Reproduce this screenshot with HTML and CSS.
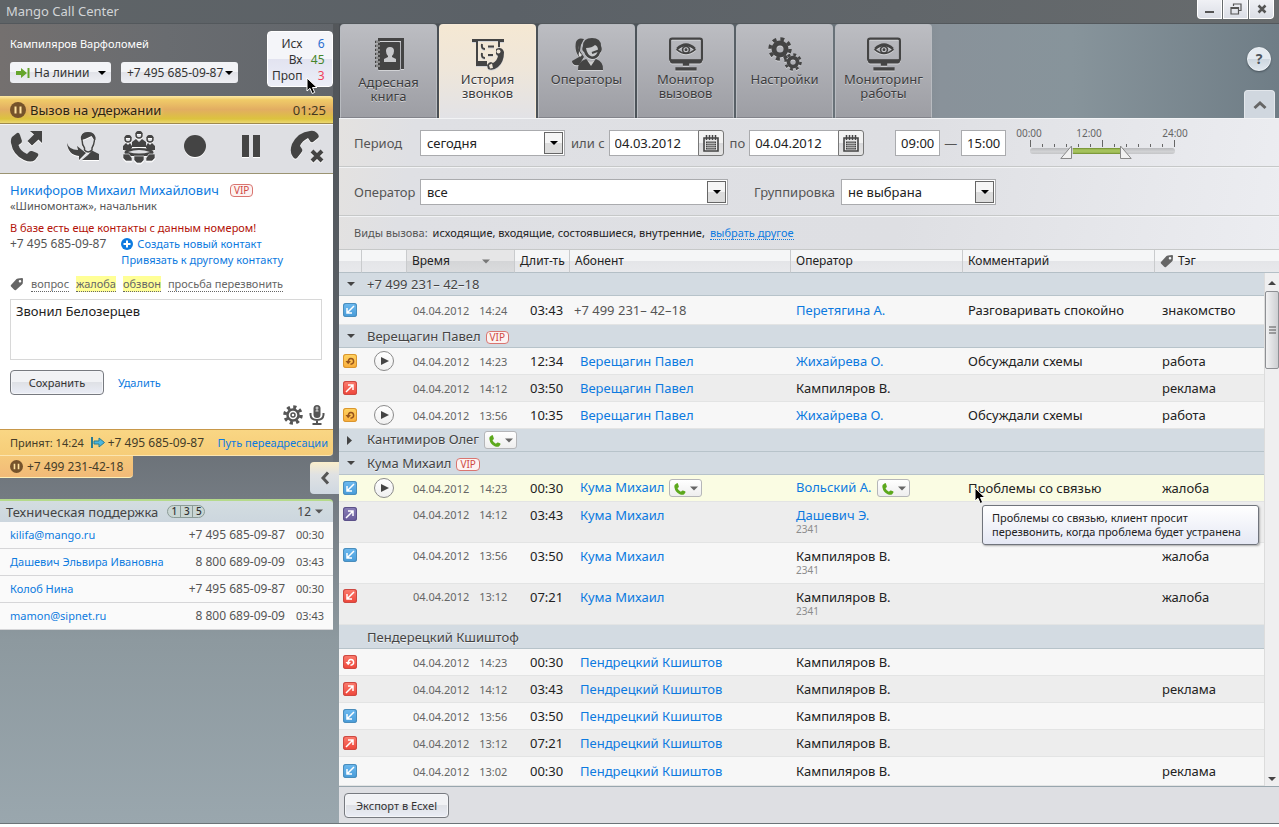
FILE: index.html
```html
<!DOCTYPE html>
<html lang="ru">
<head>
<meta charset="utf-8">
<title>Mango Call Center</title>
<link rel="stylesheet" href="styles.css">
</head>
<body>
<svg class="sprite" aria-hidden="true">
  <symbol id="caret" viewBox="0 0 8 4"><path d="M0 0H8L4 4Z"/></symbol>
  <symbol id="caret-right" viewBox="0 0 5 9"><path d="M0 0L5 4.500L0 9Z"/></symbol>
  <symbol id="in" viewBox="0 0 14 14"><path d="M11 3L4.500 9.500M4 5V10H9" fill="none" stroke="#fff" stroke-width="1.500"/></symbol>
  <symbol id="out" viewBox="0 0 14 14"><path d="M3 11L9.500 4.500M5 4H10V9" fill="none" stroke="#fff" stroke-width="1.500"/></symbol>
  <symbol id="fwd" viewBox="0 0 14 14"><path d="M7.500 10.200Q10.800 10 10.600 7Q10.200 4.500 7.800 4.600Q5.300 4.800 5.200 8" fill="none" stroke="currentColor" stroke-width="1.500"/><path d="M2.500 7H8L5.200 10.300Z" fill="currentColor"/></symbol>
  <symbol id="handset" viewBox="0 0 32 32"><path d="M2 7L7 3Q9 2 10 5L12 11Q12 13 10 14L8.500 15Q10 21 17 24L19 22Q20 20.500 22 21L27 23Q29 24 28 26L25 30Q21 33 14 30Q3 25 1 13Q.5 9 2 7Z"/></symbol>
  <symbol id="tag" viewBox="0 0 14 14"><path d="M1 8L6.500 2Q7 1.500 8 1.500L12 1Q13 1 13 2L12.800 6Q12.800 6.800 12 7.400L6 13Q5 13.600 4.200 12.800L1 9.500Q.4 8.700 1 8ZM10 3A1.300 1.300 0 1 0 11.300 4.300A1.300 1.300 0 0 0 10 3Z" fill-rule="evenodd"/></symbol>
  <symbol id="held" viewBox="0 0 16 16"><circle cx="8" cy="8" r="8" fill="#75532b"/><path d="M5.500 4.500V11.500M10.500 4.500V11.500" stroke="#ffe3a0" stroke-width="2"/></symbol>
  <symbol id="calendar" viewBox="0 0 16 17"><path d="M1 3H15V16H1Z" fill="#e8e8e8" stroke="#444" stroke-width="1.600"/><path d="M3.500 0V5M6.500 0V5M9.500 0V5M12.500 0V5" stroke="#444" stroke-width="1.500"/><rect x="3" y="6.500" width="10" height="8" fill="#444"/><path d="M3 8.500H13M3 10.500H13M3 12.500H13M5 6.500V14.500M7 6.500V14.500M9 6.500V14.500M11 6.500V14.500" stroke="#ddd" stroke-width=".6"/></symbol>
  <symbol id="gear" viewBox="0 0 24 24"><g fill="none" stroke="currentColor"><circle cx="12" cy="12" r="6" stroke-width="5"/><circle cx="12" cy="12" r="10" stroke-width="3.500" stroke-dasharray="3.930 3.930"/></g></symbol>
  <symbol id="eye-monitor" viewBox="0 0 32 32"><rect x="1" y="1.500" width="30" height="21" rx="2" fill="none" stroke="#444" stroke-width="2"/><path d="M1 21H31V23Q31 25 29 25H3Q1 25 1 23ZM13 25H19V27H13ZM6 28.500H26V31.500H6Z" fill="#444"/><path d="M7.500 12Q16 4 24.500 12Q16 19 7.500 12Z" fill="none" stroke="#444" stroke-width="1.500"/><path d="M7.500 11Q16 3 24.500 11" fill="none" stroke="#444" stroke-width="2"/><circle cx="16" cy="12" r="3.200" fill="none" stroke="#444" stroke-width="1.500"/><circle cx="16" cy="12" r="1.300" fill="#444"/></symbol>
  <symbol id="cursor" viewBox="0 0 12 18"><path d="M1 1V14L4 11.300L6.200 16.500L8.700 15.400L6.500 10.500H11Z" fill="#000" stroke="#fff" stroke-width="1"/></symbol>
</svg>

<div class="app">
  <header class="titlebar">
    <h1>Mango Call Center</h1>
    <div class="window-buttons">
      <button aria-label="Свернуть"><svg width="11" height="11" viewBox="0 0 11 11"><path d="M1 8H10" stroke="#555" stroke-width="2"/></svg></button>
      <button aria-label="Развернуть"><svg width="12" height="12" viewBox="0 0 12 12"><path d="M3.500 3V1H11V7.500H9M1 4.500H8.500V11H1ZM1 5.500H8.500" fill="none" stroke="#555" stroke-width="1.200"/></svg></button>
      <button aria-label="Закрыть"><svg width="10" height="10" viewBox="0 0 10 10"><path d="M1.500 1.500L8.500 8.500M8.500 1.500L1.500 8.500" stroke="#555" stroke-width="2.500"/></svg></button>
    </div>
  </header>

  <div class="workspace">
    <aside class="sidebar">
      <section class="profile">
        <div class="profile-main">
          <div class="profile-name">Кампиляров Варфоломей</div>
          <div class="profile-controls">
            <div class="pill status">
              <svg class="pill-icon" width="14" height="12" viewBox="0 0 14 12"><path d="M0 4H5V1L11 6L5 11V8H0Z" fill="#66a52c"/><path d="M12.500 1V11" stroke="#66a52c" stroke-width="2"/></svg>
              <select aria-label="Статус"><option>На линии</option></select>
              <svg class="caret" width="8" height="4"><use href="#caret"/></svg>
            </div>
            <div class="pill line">
              <select aria-label="Номер"><option>+7 495 685-09-87</option></select>
              <svg class="caret" width="8" height="4"><use href="#caret"/></svg>
            </div>
          </div>
        </div>
        <dl class="counters">
          <dt>Исх</dt><dd class="c-out">6</dd>
          <dt>Вх</dt><dd class="c-in">45</dd>
          <dt>Проп</dt><dd class="c-miss">3</dd>
        </dl>
        <svg class="cursor" width="12" height="18"><use href="#cursor"/></svg>
      </section>

      <section class="hold-bar">
        <svg width="16" height="16"><use href="#held"/></svg>
        <h2>Вызов на удержании</h2>
        <span>01:25</span>
      </section>

      <div class="call-tools">
        <button aria-label="Перевести"><svg width="34" height="34" viewBox="0 0 34 34"><use href="#handset" width="32" height="32"/><path d="M20 1H32V13L28.500 9.500L22 15.500L17.500 11L24 4.500Z"/></svg></button>
        <button aria-label="Передать оператору"><svg width="34" height="34" viewBox="0 0 34 34"><path d="M16 10Q15 3 22 3Q29 3 28.500 10Q28 15 26 18V20Q22 24 18.500 20V18Q16 15 16 10Z" fill="none" stroke="#444" stroke-width="1.500"/><path d="M15 10Q14 2 22 2Q30 2 29.500 10Q27 9 25.500 6Q20 9 15 10ZM18 21L22 25L26 20.500L33 24V30H16L22 25Z"/><path d="M1 13Q3 20 12 20L11 16L20 23L13 30V26Q2 25 1 13Z"/></svg></button>
        <button aria-label="Конференция"><svg width="34" height="34" viewBox="0 0 34 34"><g fill="none" stroke="#444" stroke-width="1.500"><circle cx="17" cy="5" r="3"/><circle cx="6" cy="9" r="3"/><circle cx="28" cy="9" r="3"/></g><path d="M13.500 4Q14 .5 17 1Q20 .5 20.500 4ZM2.500 8Q3 4.500 6 5Q9 4.500 9.500 8ZM24.500 8Q25 4.500 28 5Q31 4.500 31.500 8ZM10 17V12L14 9L17 12L20 9L24 12V17ZM1 20V16L4 13L6 15L8 13L10 16V18L7 21ZM33 20V16L30 13L28 15L26 13L24 16V18L27 21Z"/><path d="M3 21Q6 18 17 18Q28 18 31 21Q33 24 28 26H6Q1 24 3 21Z"/><path d="M6 22Q17 18 28 22Q17 25 6 22Z" fill="#dedfe3"/><path d="M1 24H7L10 28V31H4L1 28ZM33 24H27L24 28V31H30L33 28ZM12 26H22V30L19 33H15L12 30Z" stroke="#dedfe3" stroke-width=".7"/></svg></button>
        <button aria-label="Запись"><svg width="34" height="34" viewBox="0 0 34 34"><circle cx="17" cy="16" r="11"/></svg></button>
        <button aria-label="Пауза"><svg width="34" height="34" viewBox="0 0 34 34"><path d="M8 5H15V27H8ZM19 5H26V27H19Z"/></svg></button>
        <button aria-label="Завершить"><svg width="34" height="34" viewBox="0 0 34 34"><path d="M2 14Q8 2 20 1Q24 0 27 3Q30 6 28 8L23 12Q21 13 20 11L18 8Q12 11 10 16L12 19Q13 21 11 23L7 28Q5 30 3 27Q-1 22 2 14Z"/><path d="M22 21L32 31M32 21L22 31" stroke="#444" stroke-width="4"/></svg></button>
      </div>

      <section class="contact">
        <div class="contact-title"><a href="#">Никифоров Михаил Михайлович</a><span class="vip">VIP</span></div>
        <div class="contact-company">«Шиномонтаж», начальник</div>
        <div class="contact-warning">В базе есть еще контакты с данным номером!</div>
        <div class="contact-phone">
          <span>+7 495 685-09-87</span>
          <div class="contact-links">
            <a href="#"><svg width="12" height="12" viewBox="0 0 12 12"><circle cx="6" cy="6" r="6" fill="#0c7ae0"/><path d="M6 2.500V9.500M2.500 6H9.500" stroke="#fff" stroke-width="2"/></svg>Создать новый контакт</a>
            <a href="#">Привязать к другому контакту</a>
          </div>
        </div>
        <div class="contact-tags">
          <svg class="tag-icon" width="14" height="14"><use href="#tag"/></svg>
          <a href="#">вопрос</a><a href="#" class="on">жалоба</a><a href="#" class="on">обзвон</a><a href="#">просьба перезвонить</a>
        </div>
        <textarea aria-label="Заметка">Звонил Белозерцев</textarea>
        <div class="contact-actions"><button class="button">Сохранить</button><a href="#">Удалить</a></div>
        <div class="contact-icons">
          <button aria-label="Настройки"><svg width="20" height="20" viewBox="0 0 20 20" fill="none" stroke="#555"><circle cx="10" cy="10" r="5.500" stroke-width="2.500"/><circle cx="10" cy="10" r="8" stroke-width="3.500" stroke-dasharray="3.140 3.140"/><circle cx="10" cy="10" r="2" stroke-width="1.500"/></svg></button>
          <button aria-label="Микрофон"><svg width="16" height="20" viewBox="0 0 16 20"><rect x="4.500" y="0" width="7" height="13" rx="3.500" fill="#555"/><path d="M1.500 8V10Q2 15 8 15Q14 15 14.500 10V8M8 15V19M3.500 19H12.500" fill="none" stroke="#555" stroke-width="2"/><path d="M6.500 3H9.500M8 1.500V6M6.500 6H9.500" stroke="#ddd"/></svg></button>
        </div>
      </section>

      <section class="forwarding">
        <div class="forward-row">
          <span>Принят: 14:24</span>
          <svg width="14" height="11" viewBox="0 0 14 11"><path d="M1 0V11" stroke="#287c93" stroke-width="2"/><path d="M3 4H8V1L13.500 5.500L8 10V7H3Z" fill="#4cb6dc" stroke="#287c93"/></svg>
          <span class="number">+7 495 685-09-87</span>
          <a href="#">Путь переадресации</a>
        </div>
        <div class="forward-held"><svg width="13" height="13"><use href="#held"/></svg>+7 499 231-42-18</div>
        <button class="collapse" aria-label="Свернуть панель"><svg width="10" height="14" viewBox="0 0 10 14"><path d="M8 1.500L3 7L8 12.500" fill="none" stroke="#555" stroke-width="3"/></svg></button>
      </section>

      <section class="support">
        <header>
          <h2>Техническая поддержка</h2>
          <span class="segments"><b>1</b><b>3</b><b>5</b></span>
          <button class="support-count">12<svg width="8" height="5"><use href="#caret"/></svg></button>
        </header>
        <ul>
          <li><a href="#">kilifa@mango.ru</a><span class="number">+7 495 685-09-87</span><time>00:30</time></li>
          <li><a href="#">Дашевич Эльвира Ивановна</a><span class="number">8 800 689-09-09</span><time>03:43</time></li>
          <li><a href="#">Колоб Нина</a><span class="number">+7 495 685-09-87</span><time>00:30</time></li>
          <li><a href="#">mamon@sipnet.ru</a><span class="number">8 800 689-09-09</span><time>03:43</time></li>
        </ul>
      </section>
    </aside>

    <main class="content">
      <nav class="tabs">
        <a href="#"><svg width="32" height="37" viewBox="0 0 32 37"><path d="M5 1H31V32H28V4H5Z" fill="#444"/><rect x="5" y="5" width="22" height="28" rx="1" fill="#444"/><path d="M2 5H7M2 9H7M2 13H7M2 17H7M2 21H7M2 25H7M2 29H7" stroke="#444" stroke-width="2.500"/><path d="M3 5H7M3 9H7M3 13H7M3 17H7M3 21H7M3 25H7M3 29H7" stroke="#ccc" stroke-width="1"/><path d="M13 14Q13 10 17 10Q21 10 21 14Q21 17 19 19V20L23 22V25H11V22L15 20V19Q13 17 13 14Z" fill="#c8c9cc"/></svg>Адресная<br>книга</a>
        <a href="#" class="active" aria-current="page"><svg width="34" height="34" viewBox="0 0 34 34"><path d="M1 2H33V5H29V10H27V4H7V27H14V29H5V5H1Z" fill="#444"/><g fill="none" stroke="#444" stroke-width="2"><path d="M11 7Q10 12 14 12M11 16Q10 21 14 21M17 9.500H23M17 18H22"/></g><path d="M7 24H16V29H6Z" fill="#444"/><path d="M25 12Q31 9 33 15Q33 25 27 30Q22 34 17 32L16 28Q18 25 20 25L22 26Q26 24 27 19L25 17Z" fill="#444"/><circle cx="27.500" cy="14.500" r="2" fill="#efe6d8"/><path d="M18 28L21 26.500L22 31L19 31.500Z" fill="#efe6d8"/></svg>История<br>звонков</a>
        <a href="#"><svg width="34" height="34" viewBox="0 0 34 34"><path d="M6 5Q8 0 14 2L11 8L10 14L14 20L9 28Q2 29 2 24L9 20Q4 13 6 5Z" fill="#444"/><path d="M8 8Q8 15 12 18L10 20Q8 19 9 15Z" fill="#ddd"/><path d="M13 9Q13 1 22 1Q31 1 31 9Q33 13 30 16Q28 22 22 22Q16 21 14 15Q11 13 13 9Z" fill="#444"/><path d="M16 11Q22 11 25 8Q28 9 28 13Q27 19 22 19.500Q17 18 16 11Z" fill="#c8c9cc"/><path d="M22 16L30 13" stroke="#444" stroke-width="2"/><path d="M8 33Q7 25 16 22L21 26L26 22Q34 25 33 33Z" fill="#444"/><path d="M17 23L21 29L25 23L21 25Z" fill="#ccc"/></svg>Операторы</a>
        <a href="#"><svg width="34" height="34"><use href="#eye-monitor"/></svg>Монитор<br>вызовов</a>
        <a href="#"><svg class="gears" width="34" height="34" viewBox="0 0 34 34"><use href="#gear" width="24" height="24"/><use href="#gear" x="16" y="16" width="18" height="18"/></svg>Настройки</a>
        <a href="#"><svg width="34" height="34"><use href="#eye-monitor"/></svg>Мониторинг<br>работы</a>
        <div class="tabs-side">
          <button class="help" aria-label="Помощь">?</button>
          <button class="fold" aria-label="Скрыть меню"><svg width="14" height="10" viewBox="0 0 14 10"><path d="M1.500 8L7 3L12.500 8" fill="none" stroke="#666" stroke-width="3"/></svg></button>
        </div>
      </nav>

      <form class="filters">
        <div class="filter-row">
          <label class="filter-label" for="period">Период</label>
          <div class="select w-period"><select id="period"><option>сегодня</option></select><i><svg width="8" height="4"><use href="#caret"/></svg></i></div>
          <label class="word" for="from">или с</label>
          <div class="date"><input id="from" value="04.03.2012"><button type="button" aria-label="Календарь"><svg width="16" height="17"><use href="#calendar"/></svg></button></div>
          <label class="word" for="to">по</label>
          <div class="date"><input id="to" value="04.04.2012"><button type="button" aria-label="Календарь"><svg width="16" height="17"><use href="#calendar"/></svg></button></div>
          <div class="times"><input aria-label="Время с" value="09:00"><span>—</span><input aria-label="Время по" value="15:00"></div>
          <div class="scale">
            <div class="scale-labels"><span>00:00</span><span>12:00</span><span>24:00</span></div>
            <svg class="ticks" width="146" height="7" viewBox="0 0 146 7"><path d="M1.500 0V7M73.500 0V7M145.500 0V7M13.500 4V7M25.500 4V7M37.500 4V7M49.500 4V7M61.500 4V7M85.500 4V7M97.500 4V7M109.500 4V7M121.500 4V7M133.500 4V7" stroke="#666"/></svg>
            <div class="track"><input class="low" type="range" min="0" max="24" value="7" aria-label="Начало"><input class="high" type="range" min="0" max="24" value="15" aria-label="Конец"></div>
          </div>
        </div>
        <div class="filter-row">
          <label class="filter-label" for="operator">Оператор</label>
          <div class="select w-operator"><select id="operator"><option>все</option></select><i><svg width="8" height="4"><use href="#caret"/></svg></i></div>
          <label class="group-label" for="grouping">Группировка</label>
          <div class="select w-group"><select id="grouping"><option>не выбрана</option></select><i><svg width="8" height="4"><use href="#caret"/></svg></i></div>
        </div>
        <div class="filter-row kinds">
          <span>Виды вызова:</span><b>исходящие, входящие, состоявшиеся, внутренние,</b><a href="#">выбрать другое</a>
        </div>
      </form>

      <div class="log">
        <table>
          <colgroup><col class="c1"><col class="c2"><col class="c3"><col class="c4"><col class="c5"><col class="c6"><col class="c7"><col class="c8"></colgroup>
          <thead><tr><th></th><th></th><th class="sorted"><span>Время<svg width="8" height="5"><use href="#caret"/></svg></span></th><th>Длит-ть</th><th>Абонент</th><th>Оператор</th><th>Комментарий</th><th><span class="th-tag"><svg class="tag-icon" width="14" height="14"><use href="#tag"/></svg>Тэг</span></th></tr></thead>
          <tbody>
            <tr class="group"><td><svg width="8" height="4"><use href="#caret"/></svg></td><td colspan="7">+7 499 231– 42–18</td></tr>
            <tr class="tall"><td><svg class="kind blue"><use href="#in"/></svg></td><td></td><td class="when">04.04.2012<span>14:24</span></td><td>03:43</td><td class="raw">+7 499 231– 42–18</td><td><a href="#">Перетягина А.</a></td><td>Разговаривать спокойно</td><td>знакомство</td></tr>
            <tr class="group"><td><svg width="8" height="4"><use href="#caret"/></svg></td><td colspan="7">Верещагин Павел<span class="vip">VIP</span></td></tr>
            <tr><td><svg class="kind orange"><use href="#fwd"/></svg></td><td><button class="play" aria-label="Слушать"></button></td><td class="when">04.04.2012<span>14:23</span></td><td>12:34</td><td><a href="#">Верещагин Павел</a></td><td><a href="#">Жихайрева О.</a></td><td>Обсуждали схемы</td><td>работа</td></tr>
            <tr class="alt"><td><svg class="kind red"><use href="#out"/></svg></td><td></td><td class="when">04.04.2012<span>14:12</span></td><td>03:50</td><td><a href="#">Верещагин Павел</a></td><td>Кампиляров В.</td><td></td><td>реклама</td></tr>
            <tr><td><svg class="kind orange"><use href="#fwd"/></svg></td><td><button class="play" aria-label="Слушать"></button></td><td class="when">04.04.2012<span>13:56</span></td><td>10:35</td><td><a href="#">Верещагин Павел</a></td><td><a href="#">Жихайрева О.</a></td><td>Обсуждали схемы</td><td>работа</td></tr>
            <tr class="group"><td><svg width="5" height="9"><use href="#caret-right"/></svg></td><td colspan="7">Кантимиров Олег<button class="dial" aria-label="Позвонить"><svg width="13" height="13"><use href="#handset"/></svg><svg width="8" height="5"><use href="#caret"/></svg></button></td></tr>
            <tr class="group"><td><svg width="8" height="4"><use href="#caret"/></svg></td><td colspan="7">Кума Михаил<span class="vip">VIP</span></td></tr>
            <tr class="current"><td><svg class="kind blue"><use href="#in"/></svg></td><td><button class="play" aria-label="Слушать"></button></td><td class="when">04.04.2012<span>14:23</span></td><td>00:30</td><td><a href="#">Кума Михаил</a><button class="dial" aria-label="Позвонить"><svg width="13" height="13"><use href="#handset"/></svg><svg width="8" height="5"><use href="#caret"/></svg></button></td><td><a href="#">Вольский А.</a><button class="dial" aria-label="Позвонить"><svg width="13" height="13"><use href="#handset"/></svg><svg width="8" height="5"><use href="#caret"/></svg></button></td><td class="hovered">Проблемы со связью<svg class="cursor" width="12" height="18"><use href="#cursor"/></svg><div class="tooltip" role="tooltip">Проблемы со связью, клиент просит<br>перезвонить, когда проблема будет устранена</div></td><td>жалоба</td></tr>
            <tr class="double alt"><td><svg class="kind purple"><use href="#out"/></svg></td><td></td><td class="when">04.04.2012<span>14:12</span></td><td>03:43</td><td><a href="#">Кума Михаил</a></td><td><a href="#">Дашевич Э.</a><small>2341</small></td><td></td><td></td></tr>
            <tr class="double"><td><svg class="kind blue"><use href="#in"/></svg></td><td></td><td class="when">04.04.2012<span>13:56</span></td><td>03:50</td><td><a href="#">Кума Михаил</a></td><td>Кампиляров В.<small>2341</small></td><td></td><td>жалоба</td></tr>
            <tr class="double alt"><td><svg class="kind red"><use href="#in"/></svg></td><td></td><td class="when">04.04.2012<span>13:12</span></td><td>07:21</td><td><a href="#">Кума Михаил</a></td><td>Кампиляров В.<small>2341</small></td><td></td><td>жалоба</td></tr>
            <tr class="group flat"><td></td><td colspan="7">Пендерецкий Кшиштоф</td></tr>
            <tr><td><svg class="kind red"><use href="#fwd"/></svg></td><td></td><td class="when">04.04.2012<span>14:23</span></td><td>00:30</td><td><a href="#">Пендрецкий Кшиштов</a></td><td>Кампиляров В.</td><td></td><td></td></tr>
            <tr class="alt"><td><svg class="kind red"><use href="#out"/></svg></td><td></td><td class="when">04.04.2012<span>14:12</span></td><td>03:43</td><td><a href="#">Пендрецкий Кшиштов</a></td><td>Кампиляров В.</td><td></td><td>реклама</td></tr>
            <tr><td><svg class="kind blue"><use href="#in"/></svg></td><td></td><td class="when">04.04.2012<span>13:56</span></td><td>03:50</td><td><a href="#">Пендрецкий Кшиштов</a></td><td>Кампиляров В.</td><td></td><td></td></tr>
            <tr class="alt"><td><svg class="kind red"><use href="#out"/></svg></td><td></td><td class="when">04.04.2012<span>13:12</span></td><td>07:21</td><td><a href="#">Пендрецкий Кшиштов</a></td><td>Кампиляров В.</td><td></td><td></td></tr>
            <tr class="tall"><td><svg class="kind blue"><use href="#in"/></svg></td><td></td><td class="when">04.04.2012<span>13:02</span></td><td>00:30</td><td><a href="#">Пендрецкий Кшиштов</a></td><td>Кампиляров В.</td><td></td><td>реклама</td></tr>
          </tbody>
        </table>
        <div class="scrollbar" aria-hidden="true">
          <svg width="8" height="4" viewBox="0 0 8 4"><path d="M0 4H8L4 0Z" fill="#444"/></svg>
          <div class="thumb"><svg width="7" height="8" viewBox="0 0 7 8"><path d="M0 1H7M0 4H7M0 7H7" stroke="#555"/></svg></div>
          <svg class="down" width="8" height="4"><use href="#caret"/></svg>
        </div>
      </div>

      <footer class="export"><button class="button">Экспорт в Ecxel</button></footer>
    </main>
  </div>
</div>
</body>
</html>
```
FILE: styles.css
```css
* { box-sizing: border-box; }
body { margin: 0; background: #fff; color: #222; font: 13px/16px "Noto Sans", "Open Sans", sans-serif; }
h1, h2, dl, dd, ul { margin: 0; padding: 0; font-weight: normal; }
a { color: #0c7ae0; text-decoration: none; }
button, input, select, textarea { font: inherit; color: inherit; margin: 0; border-radius: 0; }
button { padding: 0; cursor: pointer; }
svg { display: block; flex: none; }
.sprite { position: absolute; width: 0; height: 0; }
.number { font-size: 12px; }

.app {
  display: flex; flex-direction: column; min-height: calc(100vh - 3px);
  border-bottom: 1px solid #6c7478;
  background: linear-gradient(180deg, #55585b 0, #50555a 110px, #5f656b 430px, #737a82 500px, #8d999f 640px, #9aa7ae 827px);
}
.titlebar {
  display: flex; justify-content: space-between; height: 24px; padding: 0 5px 0 6px;
  background: linear-gradient(90deg, #5f6467, #5b6167 40%, #676b6d); border-bottom: 1px solid #53585c;
}
.titlebar h1 { font-size: 13px; line-height: 23px; color: #d2d5d7; }
.window-buttons { display: flex; gap: 1px; height: 19px; }
.window-buttons button {
  display: grid; place-items: center; width: 25px; border: 1px solid #fff; border-top: 0;
  background: linear-gradient(#f0f1f5, #dbdee6);
}
.window-buttons button:first-child { border-bottom-left-radius: 4px; }
.window-buttons button:last-child { border-bottom-right-radius: 4px; }
.workspace { flex: 1; display: flex; }

/* sidebar */
.sidebar { flex: none; width: 339px; padding-right: 6px; }
.profile {
  position: relative; display: flex; justify-content: space-between; height: 72px; padding: 7px 0 0 10px;
  background: linear-gradient(90deg, #74706f, #696c70 50%, #62666b);
}
.profile-main { padding-top: 5px; }
.profile-name { font-size: 11px; color: #fff; }
.profile-controls { display: flex; gap: 10px; margin-top: 10px; }
.pill {
  position: relative; display: flex; align-items: center; height: 21px; border-radius: 3px; padding: 0 6px;
  background: linear-gradient(#f3f4f7 50%, #e2e3e9 50%, #eeeff3); color: #333;
}
.pill select { appearance: none; border: 0; background: none; padding: 0; font-size: 12px; height: 21px; width: 100%; }
.pill .caret { position: absolute; right: 5px; top: 9px; pointer-events: none; fill: #000; }
.pill-icon { margin-right: 4px; }
.status { width: 101px; }
.line { width: 117px; }
.counters {
  display: grid; grid-template-columns: 30px 22px; align-content: center; justify-content: center;
  width: 66px; height: 56px; padding: 2px 3px 0 0; border: 1px solid #fff; border-radius: 4px; text-align: right; font-size: 12px; line-height: 16px;
  background: linear-gradient(#f4f5f9 50%, #e2e3f0 50%, #eceef8); color: #333; white-space: nowrap;
}
.counters dt { justify-self: end; }
.c-out { color: #2a6fd0; }
.c-in { color: #45852a; }
.c-miss { color: #f0405a; }
.cursor { position: absolute; z-index: 3; }
.profile .cursor { left: 306px; top: 53px; }
.hold-bar {
  display: flex; align-items: center; gap: 4px; height: 28px; padding: 0 7px 0 10px; border-radius: 0 3px 0 0;
  background: linear-gradient(#fdeaa5, #f0cb68 14%, #e2ad62 50%, #dcc33e 85%, #ecd873); border-bottom: 1px solid #9f8a4d; color: #443820;
}
.hold-bar h2 { flex: 1; font-size: 13px; color: #2b2413; text-shadow: 0 0 4px #f7dd97; }
.call-tools {
  display: flex; justify-content: space-between; align-items: center; height: 50px; padding: 0 9px 4px 10px;
  background: #dedfe3; border-bottom: 1px solid #9b9472; border-top: 1px solid #f5f5f7;
}
.call-tools button { border: 0; background: none; fill: #444; filter: drop-shadow(0 1px 0 #fff); }
.contact { padding: 8px 10px 4px; background: #fff; font-size: 11px; }
.contact-title { display: flex; align-items: center; gap: 11px; font-size: 13px; }
.vip {
  display: inline-block; height: 13px; padding: 0 3px; border: 1px solid #d97570; border-radius: 4px;
  background: #fdf3f2; color: #cf4a44; font-size: 10px; line-height: 11px;
}
.contact-company { color: #555; }
.contact-warning { margin-top: 6px; color: #b31208; }
.contact-phone { display: flex; gap: 15px; color: #555; }
.contact-phone > span { font-size: 12px; }
.contact-links { display: grid; }
.contact-links a { display: flex; align-items: center; gap: 4px; }
.tag-icon { fill: #666; }
.contact-tags { display: flex; align-items: center; gap: 7px; margin-top: 8px; line-height: 15px; }
.contact-tags a { color: #666; border-bottom: 1px dotted #666; }
.contact-tags .on { background: #ffff96; }
.contact textarea {
  display: block; width: 312px; height: 61px; margin-top: 7px; padding: 3px 5px; resize: none;
  border: 1px solid #d8d8d8; font-size: 13px; color: #222;
}
.contact-actions { display: flex; align-items: center; gap: 14px; margin-top: 10px; }
.button {
  min-width: 94px; height: 25px; padding: 0 11px; border: 1px solid #777a80; border-radius: 4px; font-size: 11px; color: #333;
  background: linear-gradient(#f1f2f5 50%, #dfe1e6 50%, #eaedf6); box-shadow: inset 0 0 0 1px #f4f5f8;
}
.contact-icons { display: flex; justify-content: flex-end; gap: 6px; margin: 10px -2px 0 0; }
.contact-icons button { border: 0; background: none; }
.forwarding { position: relative; height: 70px; font-size: 11px; color: #443c28; background: linear-gradient(#686e74, #747b82); }
.forward-row {
  display: flex; align-items: center; gap: 3px; height: 27px; padding: 0 5px 0 10px; white-space: nowrap;
  background: linear-gradient(#f9d684, #f6cd78); border-top: 1px solid #c8984a; border-bottom: 1px solid #fbe5b0; border-radius: 0 0 4px 0;
}
.forward-row svg { margin-left: 4px; }
.forward-row a { margin-left: auto; }
.forward-held {
  display: flex; align-items: center; gap: 4px; width: 133px; height: 22px; padding-left: 10px; font-size: 12px;
  background: linear-gradient(#f5c97a, #f2ba78); border-bottom: 1px solid #fdf0b8; border-radius: 0 0 4px 0;
}
.collapse {
  position: absolute; right: -6px; top: 33px; width: 29px; height: 32px; display: grid; place-items: center;
  border: 0; border-radius: 4px 0 0 4px; background: linear-gradient(#fbeecb, #dfe1e3 40%, #cfd8e1);
}
.support { font-size: 11px; }
.support header {
  display: flex; align-items: center; height: 23px; padding: 0 10px 0 6px; border-top: 2px solid #b5da8b; border-radius: 0 4px 0 0;
  background: linear-gradient(#d3dde0, #ccd6de); color: #444;
}
.support h2 { font-size: 13px; }
.segments { display: flex; margin-left: 9px; height: 13px; border: 1px solid #8b9b97; border-radius: 7px; background: #c9d6d3; }
.segments b { width: 12px; font-size: 10px; line-height: 11px; text-align: center; font-weight: 500; color: #333; }
.segments b + b { border-left: 1px solid #8b9b97; }
.support-count { display: flex; align-items: center; gap: 4px; margin-left: auto; border: 0; background: none; font-size: 12px; fill: #555; }
.support ul { list-style: none; background: #fafafa; }
.support li {
  display: grid; grid-template-columns: 1fr auto 39px; align-items: center; height: 27px; padding: 0 9px 0 10px;
  border-bottom: 1px solid #d6d6d8; color: #555;
}
.support time { text-align: right; }

/* main area */
.content { flex: 1; min-width: 0; display: flex; flex-direction: column; background: #dedfe3; }
.tabs {
  display: flex; gap: 2px; height: 94px; padding-left: 1px;
  background: linear-gradient(90deg, #4a4e53, #4d545a 35%, #6c757c 55%, #89929a 64%, #87949b 78%, #6f7d86);
}
.tabs a {
  display: flex; flex-direction: column; align-items: center; width: 97px; padding-top: 12px; border-radius: 4px 4px 0 0;
  border: 1px solid #b8bbc0; border-bottom-color: #83848b; background: linear-gradient(#bcbdc2, #9d9ea4);
  color: #3c3c3e; font-size: 13px; line-height: 14px; text-align: center; text-shadow: 0 1px 0 #d2d3d6;
}
.tabs a svg { margin-bottom: 1px; filter: drop-shadow(0 1px 0 #d2d3d6); }
.tabs .gears { color: #444; }
.tabs a.active { border-color: #f6ead8; border-bottom: 0; background: linear-gradient(#f5e8d3, #eee6da 50%, #e2e2e6); text-shadow: 0 1px 0 #fff; }
.tabs-side { display: flex; flex-direction: column; align-items: flex-end; margin-left: auto; padding: 23px 4px 0 0; gap: 19px; }
.help {
  width: 24px; height: 24px; margin-right: 4px; border: 1px solid #edf1f5; border-radius: 50%; color: #4e565e; font-size: 14px; font-weight: bold; line-height: 20px;
  background: linear-gradient(#e4eaf0 50%, #cdd6df 50%, #e0e7ee); box-shadow: 0 1px 2px #48535c;
}
.fold { display: grid; place-items: center; width: 31px; height: 28px; border: 1px solid #e3e7ec; border-bottom: 0; border-radius: 4px 4px 0 0; background: #d0d7df; }

.filters { background: linear-gradient(100deg, #e4e2e0, #dfe0e4 8%, #dedfe3 60%, #ecedf1); color: #555; }
.filter-row { display: flex; align-items: center; height: 49px; padding: 2px 0 0 15px; border-bottom: 1px solid #c6c8c8; box-shadow: inset 0 1px 0 #f2f3f5; white-space: nowrap; }
.filter-label { width: 66px; }
.select { position: relative; height: 26px; }
.select select { appearance: none; width: 100%; height: 26px; padding: 0 30px 0 6px; border: 1px solid #aaabae; background: #fff; color: #222; }
.select i {
  position: absolute; right: 2px; top: 2px; width: 19px; height: 22px; display: grid; place-items: center; pointer-events: none;
  border: 1px solid #666; background: linear-gradient(#f5f5f5 50%, #dcdcdc 50%);
}
.w-period { width: 145px; }
.w-operator { width: 308px; }
.w-group { width: 155px; }
.word { padding: 0 4px 0 6px; }
.date { display: flex; height: 26px; }
.date input { width: 89px; padding: 0 5px; border: 1px solid #aaabae; border-right: 0; background: #fff; color: #222; }
.date button { display: grid; place-items: center; width: 26px; border: 1px solid #777; border-radius: 0 3px 3px 0; background: linear-gradient(#f2f2f2 50%, #d9d9db 50%, #e5e5e5); }
.times { display: flex; align-items: center; gap: 4px; margin-left: 31px; }
.times input { width: 45px; height: 26px; padding: 0 4px; border: 1px solid #aaabae; background: #fff; color: #222; text-align: center; }
.scale { margin-left: 10px; }
.scale-labels { display: grid; grid-template-columns: 60px 86px 26px; font-size: 10px; line-height: 13px; color: #666; }
.ticks { margin-left: 13px; }
.track {
  position: relative; width: 145px; height: 6px; margin: 1px 0 6px 14px; border-radius: 3px;
  background: linear-gradient(#6e8a2f, #a5c25c 30%, #a5c25c 70%, #6e8a2f) 43px 0 / 49px 6px no-repeat, linear-gradient(#b8b9bc, #d2d3d5 60%, #c4c5c7);
}
.track input { appearance: none; position: absolute; top: -3px; width: 156px; height: 14px; margin: 0; background: none; pointer-events: none; }
.track .low { left: -12px; }
.track .high { left: 0; }
.track input::-webkit-slider-thumb {
  appearance: none; width: 12px; height: 14px; pointer-events: auto; border: 0;
  background: url("data:image/svg+xml,%3Csvg xmlns='http://www.w3.org/2000/svg' width='12' height='14'%3E%3Cpath d='M11.500 1V13.500H.8Z' fill='%23f1f1f1' stroke='%23888'/%3E%3C/svg%3E") no-repeat;
}
.track .high::-webkit-slider-thumb { transform: scaleX(-1); }
.group-label { padding: 0 6px 0 26px; }
.kinds { height: 34px; padding-top: 0; font-size: 11px; gap: 5px; border-bottom: 1px solid #c6c8c8; }
.kinds b { font-weight: normal; color: #222; }
.kinds a { line-height: 13px; border-bottom: 1px dotted #0c7ae0; }

/* call log */
.log { position: relative; flex: 1; background: #f7f7f7; }
.log table { width: 100%; table-layout: fixed; border-collapse: separate; border-spacing: 0; }
.c1 { width: 22px; } .c2 { width: 45px; } .c3 { width: 108px; } .c4 { width: 55px; }
.c5 { width: 221px; } .c6 { width: 172px; } .c7 { width: 192px; }
.log th {
  height: 23px; padding: 0 5px; border-bottom: 1px solid #b4bfc6; text-align: left; font-weight: normal; font-size: 12px;
  background: linear-gradient(#f5f6f7 50%, #e4e5e8 50%, #e8e9ec); white-space: nowrap;
}
.log th + th { border-left: 1px solid #c9cbcd; }
.log th.sorted { background: linear-gradient(#e6e6e7 50%, #d4d5d7 50%, #dadbdd); }
.sorted span { display: flex; align-items: center; justify-content: space-between; padding-right: 19px; fill: #777; }
.th-tag { display: flex; align-items: center; gap: 4px; }
.log td { position: relative; height: 27px; padding: 0 0 0 6px; border-bottom: 1px solid #e3e4e4; background: #f7f7f7; white-space: nowrap; vertical-align: middle; }
.log td:first-child { padding-left: 4px; }
.log td:nth-child(4) { padding-left: 16px; }
.log td:nth-child(5) { padding-left: 11px; }
.log td:nth-child(8) { padding-left: 8px; }
.log .raw.raw { padding-left: 5px; color: #555; }
.log .tall td { height: 29px; }
.log .alt td { background: #ededed; }
.log .current td { background: #fafce3; }
.log .double td { height: 41px; vertical-align: top; padding-top: 5px; }
.log .group td { height: 23px; background: #d3dbe2; border-bottom-color: #b7c3ca; color: #444; fill: #444; text-shadow: 0 1px 0 #eef1f4; }
.log .group td:first-child { padding-left: 8px; }
.log .group.flat td { height: 24px; }
.log .when { padding: 2px 0 0 7px; font-size: 11px; color: #666; }
.when span { margin-left: 10px; }
.log small { display: block; font-size: 10px; line-height: 12px; color: #8c8c8c; }
.kind { width: 14px; height: 14px; border-radius: 3px; }
.blue { background: linear-gradient(#6dbaf0, #489bd8); box-shadow: inset 0 0 0 1px #4a8dbb; }
.red { background: linear-gradient(#fb7e70, #ee4438); box-shadow: inset 0 0 0 1px #cc4942; color: #fff; }
.orange { background: linear-gradient(#ffd564, #f9ac3a); box-shadow: inset 0 0 0 1px #d9952f; color: #96541c; }
.purple { background: linear-gradient(#8b80b8, #675a9a); box-shadow: inset 0 0 0 1px #5c5189; }
.play { display: grid; place-items: center; width: 20px; height: 20px; margin-left: 7px; border: 1px solid #8a8a8a; border-radius: 50%; background: linear-gradient(#fff, #f0f0f0); }
.play::before { content: ""; border: 4px solid transparent; border-left: 8px solid #444; border-right: 0; margin-left: 2px; }
.dial {
  display: inline-flex; align-items: center; gap: 3px; height: 18px; margin-left: 5px; padding: 0 3px 0 4px; border: 1px solid #b5b6b9; border-radius: 3px;
  background: linear-gradient(#fff, #eee); vertical-align: middle; fill: #666;
}
.dial svg:first-child { fill: #5ca81c; }
.group .vip { margin-left: 5px; vertical-align: middle; text-shadow: none; }
.hovered .cursor { left: 12px; top: 12px; }
.tooltip {
  position: absolute; z-index: 2; left: 20px; top: 30px; min-width: 277px; padding: 5px 9px; border: 1px solid #70747c; border-radius: 3px;
  background: linear-gradient(#fff, #e5e8f4); box-shadow: 1px 1px 2px #aaa; font-size: 11px; line-height: 14px;
}
.scrollbar {
  position: absolute; right: 0; top: 23px; bottom: 0; width: 15px; display: flex; flex-direction: column; align-items: center; padding: 8px 0 5px;
  background: #efeff0; border-left: 1px solid #dcdcdc;
}
.thumb { display: grid; place-items: center; width: 14px; height: 78px; margin-top: 6px; border: 1px solid #8e9094; border-radius: 2px; background: linear-gradient(90deg, #f2f2f3, #cdcfd2); }
.down { margin-top: auto; fill: #444; }
.export { padding: 6px 5px 5px; border-top: 1px solid #98a6ae; background: #dedfe3; }
```
